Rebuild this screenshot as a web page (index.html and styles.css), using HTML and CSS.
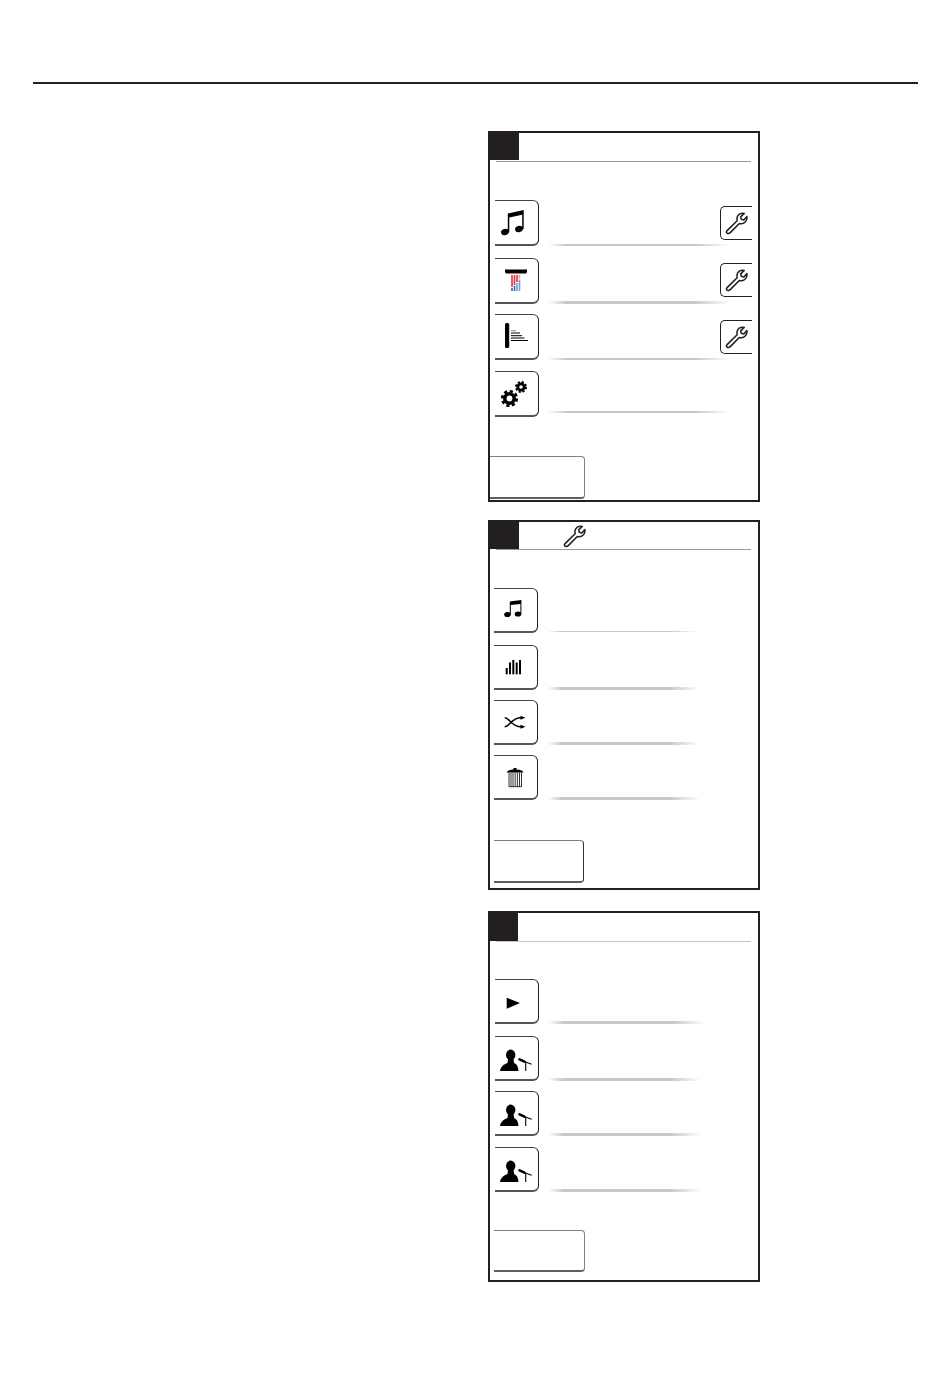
FILE: index.html
```html
<!DOCTYPE html>
<html>
<head>
    <meta charset="UTF-8">
    <title>Menu</title>
    <link rel="stylesheet" href="styles.css">
</head>
<body>
    <svg class="icon-defs">
        <symbol id="wrench" viewBox="0 0 24 24">
            <path d="M3.200 18.600L12.600 9.300C11.800 6 13.400 2.800 17 2.200C17.800 2 18.800 2.100 19.400 2.300L16 5.600L16.600 8L19 8.600L22 5.300C22.500 8.500 20.600 12.200 16.400 12.200C15.800 12.200 15.200 12.100 14.700 12L6 20.800C4.800 22 3 21.800 2.400 20.800C2 20 2.400 19.400 3.200 18.600Z" fill="#fff" stroke="#231f20" stroke-width="1.500" stroke-linejoin="round"/>
        </symbol>
        <symbol id="singer" viewBox="0 0 43 43">
            <ellipse cx="15.700" cy="18" rx="4.700" ry="5.400" fill="#000"/>
            <path d="M5 34C6 29 9 27.500 12.500 26L13 22H18.500L19 26C22 27.500 23 29 23.500 34Z" fill="#000"/>
            <path d="M24.500 22.300L29.500 24.700" stroke="#000" stroke-width="2.600" stroke-linecap="round"/>
            <path d="M29 24.600L36.700 27.300M30.700 25.500V34" stroke="#000" stroke-width="1.100"/>
        </symbol>
    </svg>

    <div class="top-rule"></div>

    <div class="panels">
        <!-- menu principal -->
        <section class="panel panel-main">
            <div class="panel-header"><div class="corner"></div></div>
            <div class="header-line"></div>
            <div class="menu">
                <div class="menu-row">
                    <button class="menu-button">
                        <svg class="menu-icon" viewBox="0 0 43 43">
                            <ellipse cx="10" cy="31" rx="4" ry="3.100" transform="rotate(-18 10 31)"/>
                            <ellipse cx="24" cy="28" rx="4" ry="3.100" transform="rotate(-18 24 28)"/>
                            <path d="M12.800 31V12.500L28.700 9V28H27.200V13.800L14.300 16.600V31Z"/>
                        </svg>
                    </button>
                    <div class="row-body">
                        <button class="tool-button"><svg class="tool-icon"><use href="#wrench"/></svg></button>
                        <div class="divider"></div>
                    </div>
                </div>
                <div class="menu-row">
                    <button class="menu-button">
                        <svg class="menu-icon" viewBox="0 0 43 43">
                            <path d="M10 10.500H32V12.500C32 14 31 14.500 30 14.500H12C11 14.500 10 14 10 12.500Z"/>
                            <path d="M17 16V28M19.500 16V26M22 16V23" stroke="#e2323c" stroke-width="1.600" fill="none"/>
                            <path d="M24.500 16V19.500" stroke="#ee8f92" stroke-width="1.600" fill="none"/>
                            <path d="M17 29V32M19.500 27V32" stroke="#3f62aa" stroke-width="1.600" fill="none"/>
                            <path d="M22 24V32M24.500 20.500V32" stroke="#7d9ccc" stroke-width="1.600" fill="none"/>
                        </svg>
                    </button>
                    <div class="row-body">
                        <button class="tool-button"><svg class="tool-icon"><use href="#wrench"/></svg></button>
                        <div class="divider divider-thick"></div>
                    </div>
                </div>
                <div class="menu-row">
                    <button class="menu-button">
                        <svg class="menu-icon" viewBox="0 0 43 43">
                            <rect x="10" y="8" width="4.200" height="25" rx="1.500"/>
                            <path d="M16 15.700H21" stroke="#888" stroke-width="1"/>
                            <path d="M16 18H25M16 20.700H27M16 23H29.500M16 25.500H33" stroke="#000" stroke-width="1"/>
                        </svg>
                    </button>
                    <div class="row-body">
                        <button class="tool-button"><svg class="tool-icon"><use href="#wrench"/></svg></button>
                        <div class="divider"></div>
                    </div>
                </div>
                <div class="menu-row">
                    <button class="menu-button">
                        <svg class="menu-icon" viewBox="0 0 43 43" fill="none" stroke="#000">
                            <circle cx="14.500" cy="26.500" r="4.700" stroke-width="3.600"/>
                            <circle cx="14.500" cy="26.500" r="7.300" stroke-width="2.600" stroke-dasharray="3.200 2.530"/>
                            <circle cx="26" cy="15" r="3.200" stroke-width="2.800"/>
                            <circle cx="26" cy="15" r="5" stroke-width="2" stroke-dasharray="2.200 1.730"/>
                        </svg>
                    </button>
                    <div class="row-body">
                        <div class="divider divider-raised"></div>
                    </div>
                </div>
            </div>
            <button class="back-button"></button>
        </section>

        <!-- réglages -->
        <section class="panel panel-settings">
            <div class="panel-header">
                <div class="corner"></div>
                <svg class="header-icon"><use href="#wrench"/></svg>
            </div>
            <div class="header-line"></div>
            <div class="menu">
                <div class="menu-row">
                    <button class="menu-button">
                        <svg class="menu-icon" viewBox="0 0 43 43">
                            <ellipse cx="13.500" cy="25.500" rx="3.300" ry="2.600"/>
                            <ellipse cx="24" cy="25" rx="3.300" ry="2.600"/>
                            <path d="M15.800 25.500V12.500L27.400 11V25H26.400V15L16.800 16V25.500Z"/>
                        </svg>
                    </button>
                    <div class="row-body">
                        <div class="divider divider-thin"></div>
                    </div>
                </div>
                <div class="menu-row">
                    <button class="menu-button">
                        <svg class="menu-icon" viewBox="0 0 43 43">
                            <rect x="11.700" y="22" width="2" height="6.300"/>
                            <rect x="15" y="16.500" width="2" height="11.800"/>
                            <rect x="18.300" y="14" width="2" height="14.300"/>
                            <rect x="21.700" y="16.500" width="2" height="11.800"/>
                            <rect x="25" y="14" width="2" height="14.300"/>
                        </svg>
                    </button>
                    <div class="row-body">
                        <div class="divider"></div>
                    </div>
                </div>
                <div class="menu-row">
                    <button class="menu-button">
                        <svg class="menu-icon" viewBox="0 0 43 43">
                            <path d="M10.700 16.800C16 16.800 17 25.800 27 25.800M10.700 25.800C16 25.800 17 16.800 27 16.800" fill="none" stroke="#000" stroke-width="1.500"/>
                            <path d="M26.500 14.800L31.500 16.800L26.500 18.800Z"/>
                            <path d="M26.500 23.800L31.500 25.800L26.500 27.800Z"/>
                        </svg>
                    </button>
                    <div class="row-body">
                        <div class="divider"></div>
                    </div>
                </div>
                <div class="menu-row">
                    <button class="menu-button">
                        <svg class="menu-icon" viewBox="0 0 43 43">
                            <rect x="19.500" y="12" width="3" height="2"/>
                            <path d="M12.700 16.500C13 14.200 17 13.500 21 13.500C25 13.500 29 14.200 29.300 16.500Z"/>
                            <path d="M15 16.500V30.700H27.500V16.500M17 16.500V30.700M19 16.500V30.700M21.200 16.500V30.700M23.400 16.500V30.700M25.500 16.500V30.700" fill="none" stroke="#000" stroke-width="0.800"/>
                        </svg>
                    </button>
                    <div class="row-body">
                        <div class="divider"></div>
                    </div>
                </div>
            </div>
            <button class="back-button"></button>
        </section>

        <!-- voix -->
        <section class="panel panel-voice">
            <div class="panel-header"><div class="corner"></div></div>
            <div class="header-line"></div>
            <div class="menu">
                <div class="menu-row">
                    <button class="menu-button">
                        <svg class="menu-icon" viewBox="0 0 43 43">
                            <path d="M11.700 17.700L25 23L11.700 28.700Z"/>
                        </svg>
                    </button>
                    <div class="row-body">
                        <div class="divider divider-long"></div>
                    </div>
                </div>
                <div class="menu-row">
                    <button class="menu-button"><svg class="menu-icon"><use href="#singer"/></svg></button>
                    <div class="row-body">
                        <div class="divider"></div>
                    </div>
                </div>
                <div class="menu-row">
                    <button class="menu-button"><svg class="menu-icon"><use href="#singer"/></svg></button>
                    <div class="row-body">
                        <div class="divider"></div>
                    </div>
                </div>
                <div class="menu-row">
                    <button class="menu-button"><svg class="menu-icon"><use href="#singer"/></svg></button>
                    <div class="row-body">
                        <div class="divider"></div>
                    </div>
                </div>
            </div>
            <button class="back-button"></button>
        </section>
    </div>
</body>
</html>
```

FILE: styles.css
```css
html {
    background-color: #ffffff;
}

body {
    margin: 0;
    padding: 0;
    background-color: #ffffff;
    font-family: "Liberation Sans", Arial, sans-serif;
}

.icon-defs {
    display: none;
}

.top-rule {
    height: 2px;
    margin: 82px 32px 0 33px;
    background-color: #231f20;
}

.panels {
    display: flex;
    flex-direction: column;
    width: 272px;
    margin: 47px 0 0 488px;
}

.panel {
    display: flex;
    flex-direction: column;
    box-sizing: border-box;
    height: 371px;
    border: 2px solid #231f20;
    background-color: #ffffff;
}

.panel-settings {
    height: 370px;
    margin-top: 18px;
}

.panel-voice {
    margin-top: 21px;
}

.panel-header {
    display: flex;
    align-items: flex-start;
    height: 28px;
}

.panel-settings .panel-header {
    height: 27px;
}

.corner {
    width: 30px;
    height: 27px;
    margin-left: -1px;
    background-color: #231f20;
}

.panel-voice .corner {
    height: 28px;
    margin-left: -2px;
}

.header-icon {
    width: 25px;
    height: 25px;
    margin: 2px 0 0 43px;
}

.header-line {
    height: 1px;
    margin: 0 7px 0 6px;
    background-color: #999999;
}

.panel-voice .header-line {
    background-color: #c4c4c4;
}

.menu {
    display: flex;
    flex-direction: column;
    gap: 10px;
    margin-top: 38px;
    padding-left: 5px;
}

.panel-settings .menu {
    padding-left: 4px;
}

.panel-voice .menu {
    margin-top: 37px;
}

.menu-row {
    display: flex;
    height: 45px;
}

.panel-main .menu-row {
    height: 46px;
}

.menu-row:nth-child(2) {
    margin-top: 2px;
}

.panel-main .menu-row:last-child,
.panel-voice .menu-row:last-child {
    margin-top: 1px;
}

.menu-button {
    flex: none;
    box-sizing: border-box;
    width: 44px;
    height: 100%;
    padding: 0;
    border: 1px solid #231f20;
    border-left: none;
    border-top-color: #444444;
    border-bottom: 2px solid #555555;
    border-radius: 0 6px 6px 0;
    background-color: #ffffff;
}

.menu-icon {
    display: block;
    width: 43px;
    height: 43px;
    overflow: visible;
}

.row-body {
    flex: 1;
    display: flex;
    flex-direction: column;
    justify-content: flex-end;
    padding-left: 9px;
}

.tool-button {
    display: flex;
    align-items: center;
    justify-content: center;
    box-sizing: border-box;
    align-self: flex-end;
    width: 32px;
    height: 34px;
    margin: 0 6px 4px 0;
    padding: 0;
    border: 1px solid #231f20;
    border-right: none;
    border-radius: 5px 0 0 5px;
    background-color: #ffffff;
}

.tool-icon {
    width: 25px;
    height: 25px;
}

.divider {
    width: 153px;
    height: 3px;
    background: linear-gradient(to right, rgba(198, 202, 199, 0) 0%, #c6cac7 10%, #c6cac7 80%, rgba(198, 202, 199, 0) 100%);
}

.panel-main .divider {
    width: 183px;
    height: 2px;
}

.panel-main .divider-raised {
    margin-bottom: 4px;
}

.panel-main .divider-thick {
    height: 3px;
}

.panel-settings .divider-thin {
    height: 1px;
    margin-bottom: 1px;
}

.panel-voice .divider-long {
    width: 157px;
}

.back-button {
    box-sizing: border-box;
    width: 95px;
    height: 43px;
    margin-top: auto;
    margin-bottom: 1px;
    padding: 0;
    border: 1px solid #808080;
    border-left: none;
    border-bottom: 2px solid #606060;
    border-radius: 0 4px 4px 0;
    background-color: #ffffff;
}

.panel-settings .back-button {
    width: 90px;
    margin-bottom: 5px;
    margin-left: 4px;
    border-right-color: #333333;
}

.panel-voice .back-button {
    width: 91px;
    height: 42px;
    margin-bottom: 8px;
    margin-left: 4px;
}
```
